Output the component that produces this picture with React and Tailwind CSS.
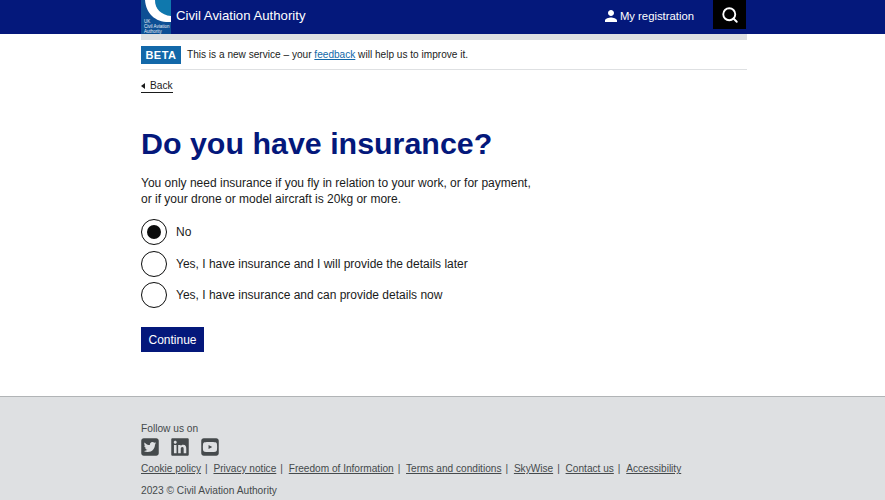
import { FaLinkedin, FaSquareTwitter, FaSquareYoutube } from 'react-icons/fa6';
import { MdPerson } from 'react-icons/md';
import { Search } from 'lucide-react';

const FOOTER_LINKS = [
  'Cookie policy',
  'Privacy notice',
  'Freedom of Information',
  'Terms and conditions',
  'SkyWise',
  'Contact us',
  'Accessibility',
];

const OPTIONS = [
  { label: 'No', checked: true },
  { label: 'Yes, I have insurance and I will provide the details later' },
  { label: 'Yes, I have insurance and can provide details now' },
];

function Logo() {
  return (
    <div className="relative h-[34px] w-[30px] overflow-hidden">
      <svg viewBox="0 0 30 34" className="absolute inset-0 h-full w-full">
        <path d="M0 0h30v34H0z" fill="#0d4f94" />
        <path d="M14 0h16v16C20 16 14 9 14 0z" fill="#0f78ad" />
        <path d="M4 0h10c0 9 6 15 16 16v6C15 23 5 14 4 0z" fill="#fff" />
      </svg>
      <div className="absolute bottom-0 left-[3px] whitespace-nowrap text-[4.5px] leading-[5px] text-[#e8f0f6]">
        <div>UK</div>
        <div>Civil Aviation</div>
        <div>Authority</div>
      </div>
    </div>
  );
}

export default function App() {
  return (
    <div className="h-[500px] overflow-hidden bg-white font-['Liberation_Sans',Arial,sans-serif] text-[#1a1b1b]">
      <header className="h-[34px] bg-[#04187b]">
        <div className="ml-[141px] flex h-full w-[605px] items-start">
          <Logo />
          <span className="ml-[5px] mt-[7px] text-[13.2px] leading-[17px] text-white">Civil Aviation Authority</span>
          <div className="ml-auto mt-[7px] flex items-center text-[11.3px] leading-[16px] text-white">
            <MdPerson size={18} />
            <span>My registration</span>
          </div>
          <div className="ml-[19px] flex h-[29px] w-[33px] items-center justify-center bg-black text-white">
            <Search size={18} strokeWidth={2.5} />
          </div>
        </div>
      </header>

      <div className="ml-[141px] w-[606px]">
        <div className="h-[6px] bg-[#dee0e2]" />
        <div className="flex h-[30px] items-center border-b border-[#dee0e2] pt-[1px]">
          <strong className="flex h-[18px] w-[40px] items-center justify-center bg-[#1268a9] text-[11px] tracking-[0.5px] text-white">BETA</strong>
          <p className="ml-[6px] text-[10.1px]">
            This is a new service – your <a className="text-[#1268a9] underline">feedback</a> will help us to improve it.
          </p>
        </div>

        <div className="mt-[9px] flex h-[17px] items-start">
          <a className="flex items-center gap-[5px] border-b border-[#1a1b1b] text-[10.2px] leading-[13px]">
            <span className="h-0 w-0 border-y-[3px] border-r-[4px] border-y-transparent border-r-[#1a1b1b]" />
            Back
          </a>
        </div>

        <h1 className="mt-[28px] text-[30.4px] font-bold leading-[38px] text-[#04187b]">Do you have insurance?</h1>

        <p className="mt-[13px] text-[12px] leading-[16px]">
          You only need insurance if you fly in relation to your work, or for payment,
          <br />
          or if your drone or model aircraft is 20kg or more.
        </p>

        <div className="mt-[12px] flex flex-col gap-[5.5px]">
          {OPTIONS.map((option) => (
            <label key={option.label} className="flex items-center text-[12px]">
              <span className="flex h-[26px] w-[26px] items-center justify-center rounded-full border-[1.5px] border-[#0b0c0c]">
                {option.checked ? <span className="h-[14px] w-[14px] rounded-full bg-[#0b0c0c]" /> : null}
              </span>
              <span className="ml-[9px]">{option.label}</span>
            </label>
          ))}
        </div>

        <button className="mt-[19px] flex h-[25px] w-[63px] items-center justify-center bg-[#04187b] text-[12px] text-white">Continue</button>
      </div>

      <footer className="mt-[44px] h-[104px] border-t border-[#b1b4b6] bg-[#dee0e2] text-[#454a4c]">
        <div className="ml-[141px] w-[606px] pt-[25px]">
          <p className="text-[10.2px] leading-[14px]">Follow us on</p>
          <div className="-ml-px mt-px flex gap-[10px]">
            <FaSquareTwitter size={20} />
            <FaLinkedin size={20} />
            <FaSquareYoutube size={20} />
          </div>
          <ul className="mt-[5px] flex text-[10.1px] leading-[14px]">
            {FOOTER_LINKS.map((link, index) => (
              <li key={link} className="flex">
                <a className="underline">{link}</a>
                {index < FOOTER_LINKS.length - 1 ? <span className="ml-[4px] mr-[5.8px]">|</span> : null}
              </li>
            ))}
          </ul>
          <p className="mt-[8px] text-[10.2px] leading-[14px]">2023 © Civil Aviation Authority</p>
        </div>
      </footer>
    </div>
  );
}
